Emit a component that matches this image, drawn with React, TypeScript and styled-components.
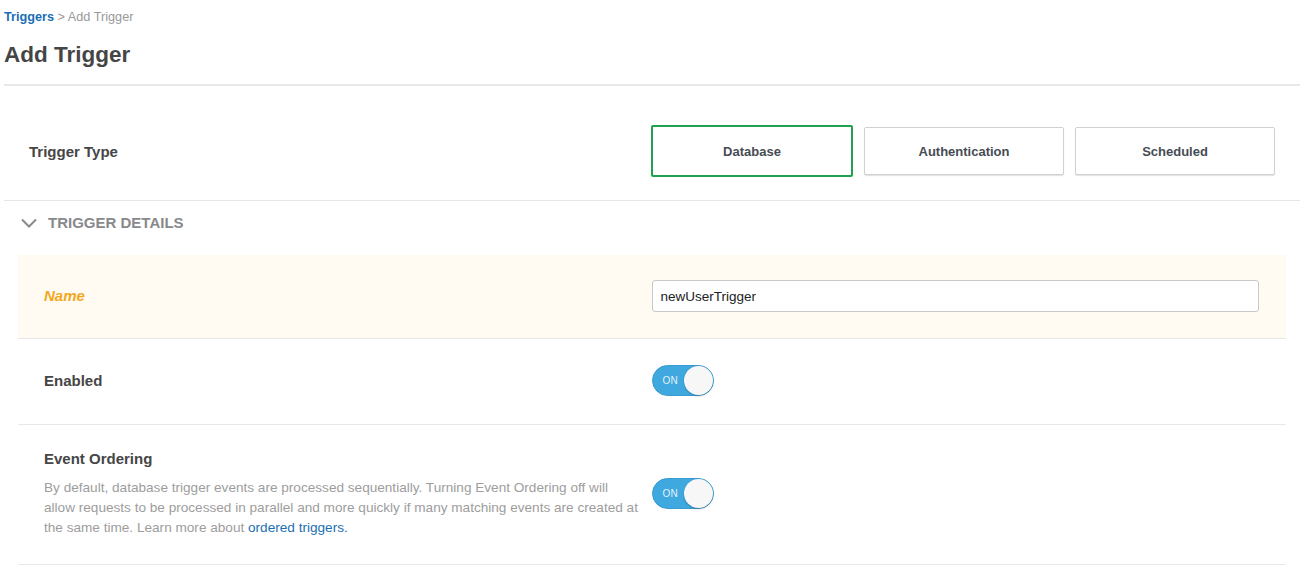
import React from "react";
import styled, { createGlobalStyle } from "styled-components";

const GlobalStyle = createGlobalStyle`
  html, body { margin: 0; padding: 0; background: #fff; }
  body { font-family: "Liberation Sans", Arial, Helvetica, sans-serif; color: #464646; }
  * { box-sizing: border-box; }
`;

const Page = styled.div`
  padding: 10px 7px 0 4px;
`;

const Breadcrumb = styled.div`
  font-size: 12.7px;
  line-height: 14px;
  color: #9a9a9a;
`;

const Crumb = styled.a`
  color: #1a6fb4;
  font-weight: bold;
  text-decoration: none;
`;

const Title = styled.h1`
  margin: 18px 0 0;
  font-size: 22.5px;
  line-height: 26px;
  font-weight: bold;
  color: #454545;
`;

const Divider = styled.div`
  margin-top: 16px;
  height: 2px;
  background: #e8e8e8;
`;

const TypeRow = styled.div`
  display: grid;
  grid-template-columns: 1fr 1fr;
  align-items: center;
  padding: 39px 0 23px;
  border-bottom: 1px solid #e6e6e6;
`;

const TypeLabel = styled.div`
  padding-left: 25px;
  font-size: 15px;
  font-weight: bold;
  color: #464646;
`;

const TypeButtons = styled.div`
  display: flex;
  gap: 11px;
  margin-left: -1px;
`;

const TypeButton = styled.button<{ $selected?: boolean }>`
  width: ${(p) => (p.$selected ? 202 : 200)}px;
  height: ${(p) => (p.$selected ? 52 : 48)}px;
  margin: ${(p) => (p.$selected ? "0" : "2px 0")};
  background: #fff;
  border: ${(p) => (p.$selected ? "2px solid #1fa24f" : "1px solid #cfd2d4")};
  border-radius: 2px;
  box-shadow: ${(p) => (p.$selected ? "none" : "0 1px 1px rgba(0,0,0,0.12)")};
  font-family: "Liberation Sans", Arial, sans-serif;
  font-size: 13px;
  font-weight: bold;
  color: #464c53;
  cursor: pointer;
`;

const SectionHeader = styled.div`
  display: flex;
  align-items: center;
  gap: 11px;
  padding: 13px 0 24px 17px;
  font-size: 15px;
  line-height: 17px;
  font-weight: bold;
  color: #88898b;
  text-transform: uppercase;
`;

const Details = styled.div`
  margin: 0 14px;
`;

const Row = styled.div<{ $highlight?: boolean; $pt: number; $pb: number }>`
  display: grid;
  grid-template-columns: 1fr 1fr;
  align-items: center;
  padding: ${(p) => p.$pt}px 27px ${(p) => p.$pb}px 26px;
  background: ${(p) => (p.$highlight ? "#fffaf2" : "#fff")};
  border-bottom: 1px solid #e8e8e8;
`;

const LabelCol = styled.div`
  padding-right: 0;
`;

const Label = styled.div<{ $warn?: boolean }>`
  font-size: 15px;
  line-height: 20px;
  font-weight: bold;
  font-style: ${(p) => (p.$warn ? "italic" : "normal")};
  color: ${(p) => (p.$warn ? "#f2a81d" : "#464646")};
`;

const Description = styled.p`
  margin: 9px 0 0;
  font-size: 13.6px;
  line-height: 20px;
  color: #9d9d9d;
`;

const Link = styled.a`
  color: #1a6fb4;
  text-decoration: none;
`;

const TextInput = styled.input`
  width: 100%;
  height: 32px;
  padding: 0 8px;
  border: 1px solid #c9c9c9;
  border-radius: 3px;
  background: #fff;
  font-family: "Liberation Sans", Arial, sans-serif;
  font-size: 13.5px;
  color: #222;
  outline: none;
`;

const ToggleTrack = styled.div`
  position: relative;
  width: 62px;
  height: 31px;
  border-radius: 16px;
  background: #3fa8de;
  border: 1px solid #3a9bd0;
  display: flex;
  align-items: center;
  padding-left: 10px;
`;

const ToggleText = styled.span`
  font-size: 10px;
  color: #e3f3fc;
  letter-spacing: 0.2px;
`;

const ToggleKnob = styled.span`
  position: absolute;
  right: 0;
  top: 0;
  width: 29px;
  height: 29px;
  border-radius: 50%;
  background: #f7f7f7;
  box-shadow: 0 1px 2px rgba(0, 0, 0, 0.25);
`;

const Toggle = () => (
  <ToggleTrack>
    <ToggleText>ON</ToggleText>
    <ToggleKnob />
  </ToggleTrack>
);

const Chevron = () => (
  <svg width="16" height="10" viewBox="0 0 16 10" fill="none">
    <path d="M1 1.5 L8 8.5 L15 1.5" stroke="#8a8a8a" strokeWidth="2" />
  </svg>
);

export default function App() {
  return (
    <>
      <GlobalStyle />
      <Page>
        <Breadcrumb>
          <Crumb href="#">Triggers</Crumb> &gt; Add Trigger
        </Breadcrumb>
        <Title>Add Trigger</Title>
        <Divider />
        <TypeRow>
          <TypeLabel>Trigger Type</TypeLabel>
          <TypeButtons>
            <TypeButton $selected>Database</TypeButton>
            <TypeButton>Authentication</TypeButton>
            <TypeButton>Scheduled</TypeButton>
          </TypeButtons>
        </TypeRow>
        <SectionHeader>
          <Chevron />
          Trigger Details
        </SectionHeader>
        <Details>
          <Row $highlight $pt={25} $pb={26}>
            <Label $warn>Name</Label>
            <TextInput defaultValue="newUserTrigger" />
          </Row>
          <Row $pt={26} $pb={28}>
            <Label>Enabled</Label>
            <div>
              <Toggle />
            </div>
          </Row>
          <Row $pt={24} $pb={26}>
            <LabelCol>
              <Label>Event Ordering</Label>
              <Description>
                By default, database trigger events are processed sequentially. Turning Event
                Ordering off will
                <br />
                allow requests to be processed in parallel and more quickly if many matching
                events are created at
                <br />
                the same time. Learn more about <Link href="#">ordered triggers.</Link>
              </Description>
            </LabelCol>
            <div>
              <Toggle />
            </div>
          </Row>
        </Details>
      </Page>
    </>
  );
}
